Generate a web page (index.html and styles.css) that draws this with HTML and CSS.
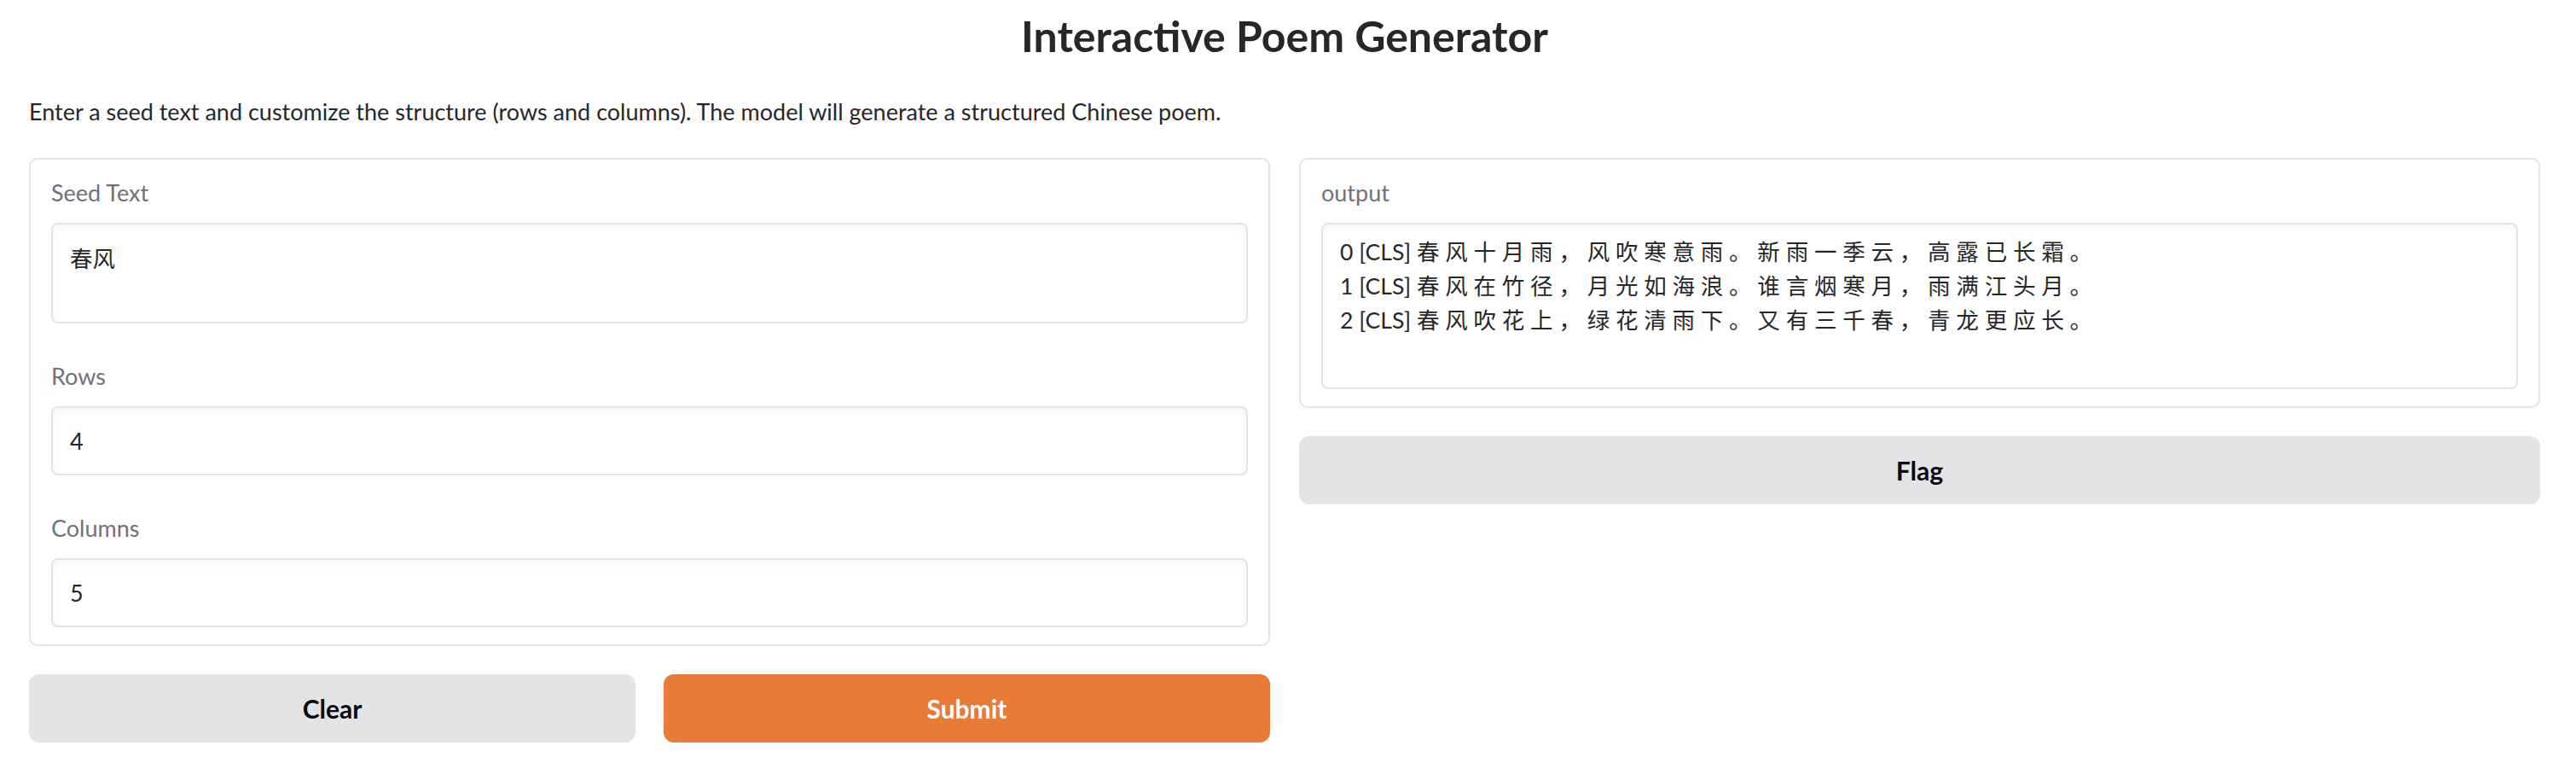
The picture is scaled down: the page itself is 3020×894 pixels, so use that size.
FILE: index.html
```html
<!DOCTYPE html>
<html lang="en">
<head>
<meta charset="utf-8">
<title>Interactive Poem Generator</title>
<link rel="stylesheet" href="styles.css">
</head>
<body>
<div class="app">
  <h1 class="title">Interactive Poem Generator</h1>
  <p class="desc">Enter a seed text and customize the structure (rows and columns). The model will generate a structured Chinese poem.</p>
  <div class="columns">
    <div class="col">
      <div class="card form">
        <div class="field">
          <label class="label" for="seed">Seed Text</label>
          <textarea id="seed" class="input area seed" rows="2">春风</textarea>
        </div>
        <div class="field">
          <label class="label" for="rows">Rows</label>
          <input id="rows" class="input line" type="text" value="4">
        </div>
        <div class="field">
          <label class="label" for="cols">Columns</label>
          <input id="cols" class="input line" type="text" value="5">
        </div>
      </div>
      <div class="btn-row">
        <button class="btn secondary">Clear</button>
        <button class="btn primary">Submit</button>
      </div>
    </div>
    <div class="col">
      <div class="card form">
        <div class="field">
          <label class="label" for="out">output</label>
          <textarea id="out" class="input area output" rows="4">0 [CLS] 春 风 十 月 雨 ， 风 吹 寒 意 雨 。 新 雨 一 季 云 ， 高 露 已 长 霜 。
1 [CLS] 春 风 在 竹 径 ， 月 光 如 海 浪 。 谁 言 烟 寒 月 ， 雨 满 江 头 月 。
2 [CLS] 春 风 吹 花 上 ， 绿 花 清 雨 下 。 又 有 三 千 春 ， 青 龙 更 应 长 。</textarea>
        </div>
      </div>
      <div class="btn-row">
        <button class="btn secondary">Flag</button>
      </div>
    </div>
  </div>
</div>
</body>
</html>
```

FILE: styles.css
```css
* { box-sizing: border-box; }

html, body {
  margin: 0;
  padding: 0;
  background: #ffffff;
}

body {
  font-family: Lato, "Noto Sans CJK SC", sans-serif;
  color: #27272a;
  font-size: 27px;
}

.app {
  padding: 0 42px 0 34px;
}

.title {
  margin: 12px 0 0;
  text-align: center;
  font-size: 50px;
  line-height: 1.2;
  font-weight: 700;
  color: #27272a;
}

.desc {
  margin: 39px 0 0;
  font-size: 27px;
  line-height: 39px;
}

.columns {
  margin-top: 35px;
  display: grid;
  grid-template-columns: 1fr 1fr;
  gap: 34px;
  align-items: start;
}

.col {
  display: flex;
  flex-direction: column;
  gap: 33px;
}

.card {
  border: 2px solid #e4e4e7;
  border-radius: 10px;
  background: #fff;
}

.form {
  display: flex;
  flex-direction: column;
  gap: 42px;
  padding: 19px 24px 20px;
}

.field {
  display: flex;
  flex-direction: column;
  gap: 16px;
}

.label {
  font-size: 27px;
  line-height: 39px;
  color: #71717a;
}

.input {
  display: block;
  width: 100%;
  margin: 0;
  font-family: Lato, "Noto Sans CJK SC", sans-serif;
  font-size: 27px;
  color: #27272a;
  background: #fff;
  border: 2px solid #e4e4e7;
  border-radius: 8px;
  box-shadow: inset 0 4px 8px rgba(0, 0, 0, 0.04);
  outline: none;
}

.line {
  height: 81px;
  padding: 0 20px;
  line-height: 37px;
}

.area {
  resize: none;
  overflow: hidden;
  font-size: 26.5px;
  line-height: 40px;
}

.seed {
  height: 118px;
  padding: 20px 20px;
}

.output {
  height: 195px;
  padding: 12px 20px;
}

.btn-row {
  display: flex;
  gap: 33px;
}

.btn {
  flex: 1 1 0;
  height: 80px;
  border: none;
  border-radius: 12px;
  font-family: Lato, "Noto Sans CJK SC", sans-serif;
  font-size: 30px;
  font-weight: 700;
  cursor: pointer;
}

.secondary {
  background: #e4e4e7;
  color: #0b0b0f;
}

.primary {
  background: #e77b37;
  color: #ffffff;
}
```
